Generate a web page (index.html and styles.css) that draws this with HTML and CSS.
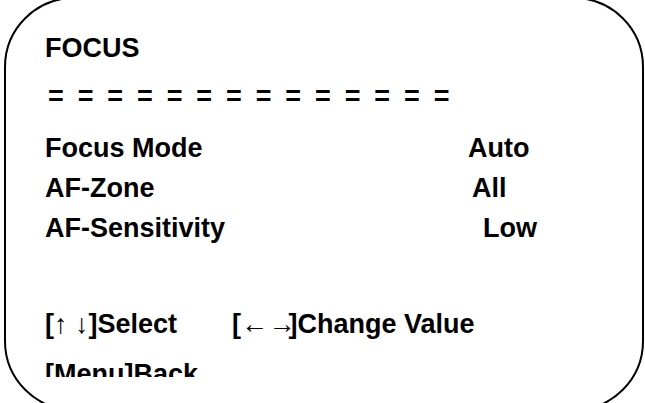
FILE: index.html
```html
<!DOCTYPE html>
<html lang="en">
<head>
  <meta charset="utf-8">
  <title>focus menu</title>
  <link rel="stylesheet" href="styles.css">
</head>
<body>
  <div class="frame">
    <div class="screen">
      <h1 class="title">FOCUS</h1>
      <div class="rule">= = = = = = = = = = = = = =</div>

      <ul class="items">
        <li><span class="label">Focus Mode</span><span class="value">Auto</span></li>
        <li><span class="label">AF-Zone</span><span class="value shift-1">All</span></li>
        <li><span class="label">AF-Sensitivity</span><span class="value shift-2">Low</span></li>
      </ul>

      <div class="hints">
        <p><span class="hint first">[↑ ↓]Select</span><span class="hint">[<span class="tight">←</span> <span class="tight">→</span>]Change Value</span></p>
        <p>[Menu]Back</p>
      </div>
    </div>
  </div>
</body>
</html>
```

FILE: styles.css
```css
html, body {
  margin: 0;
  padding: 0;
  height: 403px;
  overflow: hidden;
  background: #fff;
}

body {
  font-family: "Liberation Sans", Arial, sans-serif;
  font-size: 27px;
  font-weight: bold;
  line-height: 40px;
  color: #000;
}

.frame {
  margin: -3px 1px 0 4px;
  height: 414px;
  box-sizing: border-box;
  border: 2px solid #000;
  border-radius: 70px;
}

.screen {
  height: 378px;
  padding: 29px 0 0 39px;
  box-sizing: border-box;
  overflow: hidden;
}

.title {
  margin: 0;
  font-size: inherit;
}

.rule {
  margin: 8px 0 0 3px;
  letter-spacing: 3.2px;
}

.items {
  list-style: none;
  margin: 12px 0 0 0;
  padding: 0;
}

.items li {
  display: grid;
  grid-template-columns: 423px auto;
}

.shift-1 {
  margin-left: 4px;
}

.shift-2 {
  margin-left: 15px;
}

.hints {
  margin-top: 56px;
}

.hints p {
  margin: 0 0 10px 0;
  white-space: nowrap;
}

.hint {
  display: inline-block;
}

.hint.first {
  width: 187px;
}

.tight {
  letter-spacing: -7px;
}
```
